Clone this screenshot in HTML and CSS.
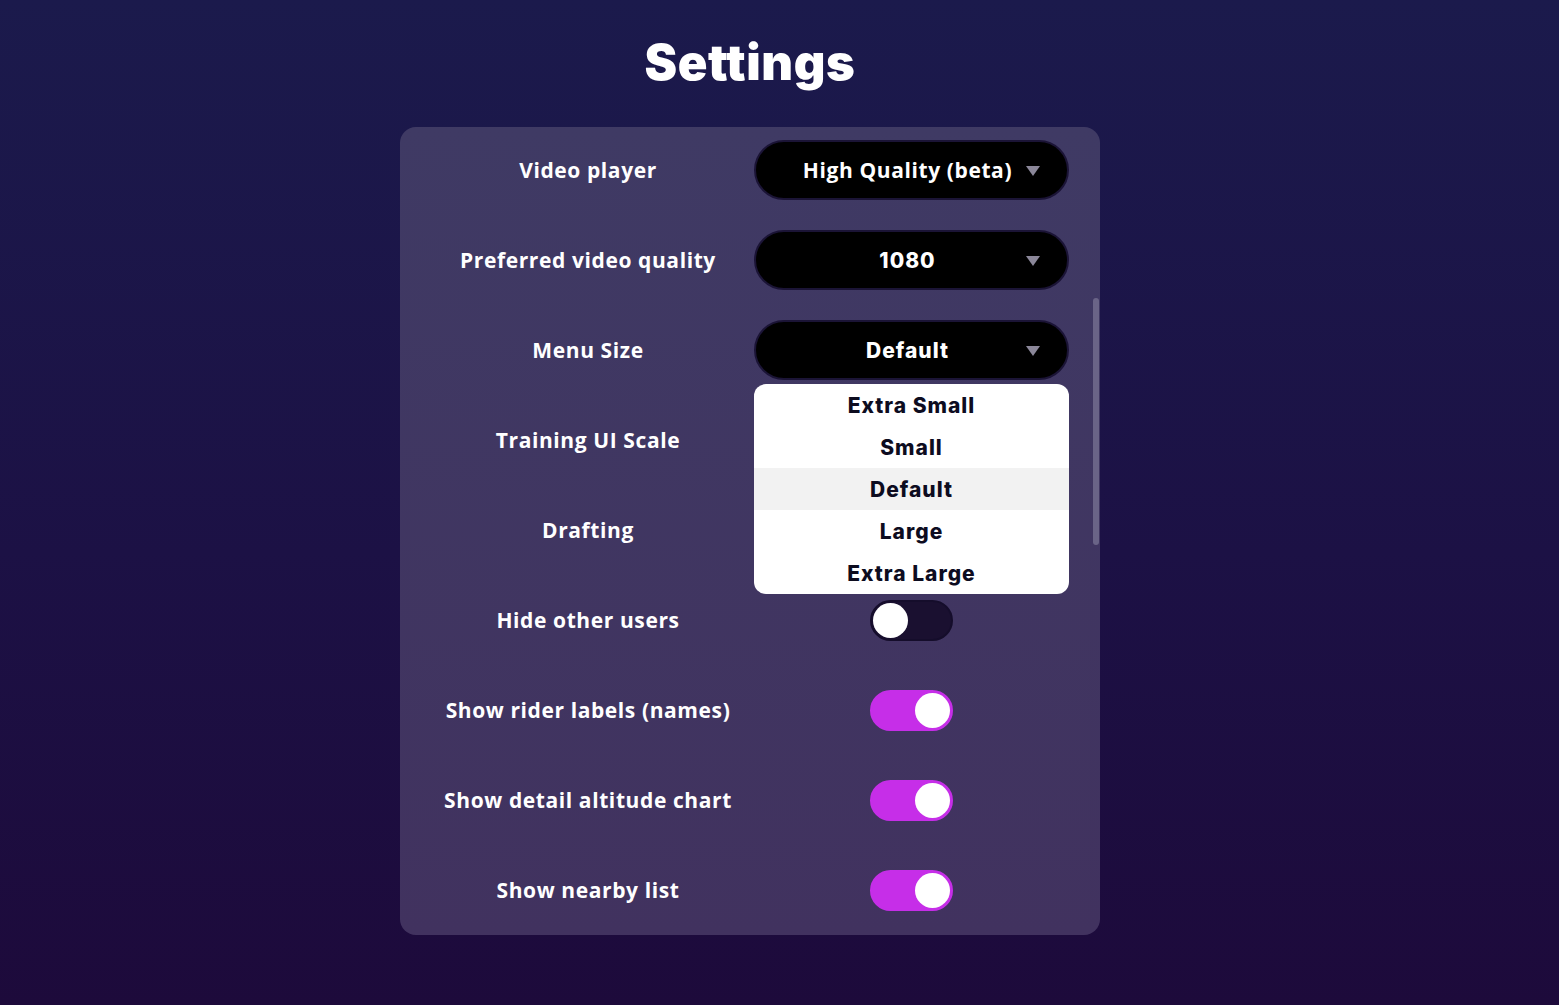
FILE: index.html
```html
<!DOCTYPE html>
<html lang="en">
<head>
    <meta charset="UTF-8">
    <meta name="viewport" content="width=device-width, initial-scale=1.0">
    <title>Settings</title>
    <link rel="stylesheet" href="styles.css">
</head>
<body>

    <div class="page">
        <h1>Settings</h1>

        <!-- Settings card -->
        <div class="card">
            <div class="row">
                <div class="label">Video player</div>
                <div class="control">
                    <div class="select plex"><span>High Quality (beta)</span><i class="caret"></i></div>
                </div>
            </div>

            <div class="row">
                <div class="label">Preferred video quality</div>
                <div class="control">
                    <div class="select"><span>1080</span><i class="caret"></i></div>
                </div>
            </div>

            <div class="row">
                <div class="label">Menu Size</div>
                <div class="control">
                    <div class="select"><span>Default</span><i class="caret"></i></div>
                    <ul class="menu">
                        <li>Extra Small</li>
                        <li>Small</li>
                        <li class="active">Default</li>
                        <li>Large</li>
                        <li>Extra Large</li>
                    </ul>
                </div>
            </div>

            <div class="row">
                <div class="label">Training UI Scale</div>
                <div class="control"></div>
            </div>

            <div class="row">
                <div class="label">Drafting</div>
                <div class="control"></div>
            </div>

            <div class="row">
                <div class="label">Hide other users</div>
                <div class="control">
                    <div class="toggle"><span class="knob"></span></div>
                </div>
            </div>

            <div class="row">
                <div class="label">Show rider labels (names)</div>
                <div class="control">
                    <div class="toggle on"><span class="knob"></span></div>
                </div>
            </div>

            <div class="row">
                <div class="label">Show detail altitude chart</div>
                <div class="control">
                    <div class="toggle on"><span class="knob"></span></div>
                </div>
            </div>

            <div class="row">
                <div class="label">Show nearby list</div>
                <div class="control">
                    <div class="toggle on"><span class="knob"></span></div>
                </div>
            </div>

            <div class="scrollbar"></div>
        </div>
    </div>

</body>
</html>
```

FILE: styles.css
```css
/* Page */
body {
    margin: 0;
    min-height: 1005px;
    background: linear-gradient(180deg, #1b1a4c 0%, #1c1145 55%, #1d0a3b 100%);
    color: #ffffff;
    font-family: 'Open Sans', 'Noto Sans', sans-serif;
}

.page {
    display: flex;
    flex-direction: column;
    align-items: center;
    padding-top: 30px;
    padding-right: 59px;
}

/* Title */
h1 {
    margin: 0 0 31px;
    font-family: 'Inter', sans-serif;
    font-weight: 900;
    font-size: 49px;
    line-height: 66px;
    letter-spacing: 0.6px;
}

/* Card */
.card {
    position: relative;
    width: 700px;
    box-sizing: border-box;
    padding: 13px 31px 15px 22px;
    background: linear-gradient(180deg, #3f3a64 0%, #41325f 100%);
    border-radius: 16px;
    display: flex;
    flex-direction: column;
    gap: 30px;
}

.row {
    display: grid;
    grid-template-columns: 332px 315px;
    height: 60px;
    align-items: center;
}

.label {
    text-align: center;
    font-weight: 700;
    font-size: 21px;
    letter-spacing: 0.6px;
}

.control {
    position: relative;
    height: 60px;
    display: flex;
    align-items: center;
    justify-content: center;
}

/* Select */
.select {
    width: 100%;
    height: 60px;
    box-sizing: border-box;
    background: #000000;
    border: 2px solid #1b1436;
    border-radius: 30px;
    display: flex;
    align-items: center;
    justify-content: center;
    position: relative;
    font-family: 'Inter', sans-serif;
    font-weight: 800;
    font-size: 21px;
    letter-spacing: 1px;
    padding-right: 8px;
}

.select.plex {
    font-family: 'Open Sans', sans-serif;
    font-weight: 700;
    letter-spacing: 0.6px;
}

.caret {
    position: absolute;
    right: 27px;
    top: 24px;
    width: 0;
    height: 0;
    border-left: 7px solid transparent;
    border-right: 7px solid transparent;
    border-top: 10px solid #8b8799;
}

/* Dropdown menu */
.menu {
    position: absolute;
    top: 64px;
    left: 0;
    width: 100%;
    margin: 0;
    padding: 0;
    list-style: none;
    background: #ffffff;
    border-radius: 12px;
    overflow: hidden;
    z-index: 2;
}

.menu li {
    height: 42px;
    line-height: 43px;
    text-align: center;
    color: #0d0c1f;
    font-family: 'Inter', sans-serif;
    font-weight: 800;
    font-size: 21px;
    letter-spacing: 1px;
}

.menu li.active {
    background: #f2f2f2;
}

/* Toggle */
.toggle {
    width: 83px;
    height: 41px;
    box-sizing: border-box;
    border-radius: 21px;
    background: #1a1030;
    border: 2px solid #150d2b;
    position: relative;
}

.toggle .knob {
    position: absolute;
    top: 1px;
    left: 1px;
    width: 35px;
    height: 35px;
    border-radius: 50%;
    background: #ffffff;
}

.toggle.on {
    background: #c62ee8;
    border-color: #c62ee8;
}

.toggle.on .knob {
    left: auto;
    right: 1px;
}

/* Scrollbar thumb */
.scrollbar {
    position: absolute;
    right: 1px;
    top: 171px;
    width: 6px;
    height: 247px;
    border-radius: 3px;
    background: #6a6487;
}
```
